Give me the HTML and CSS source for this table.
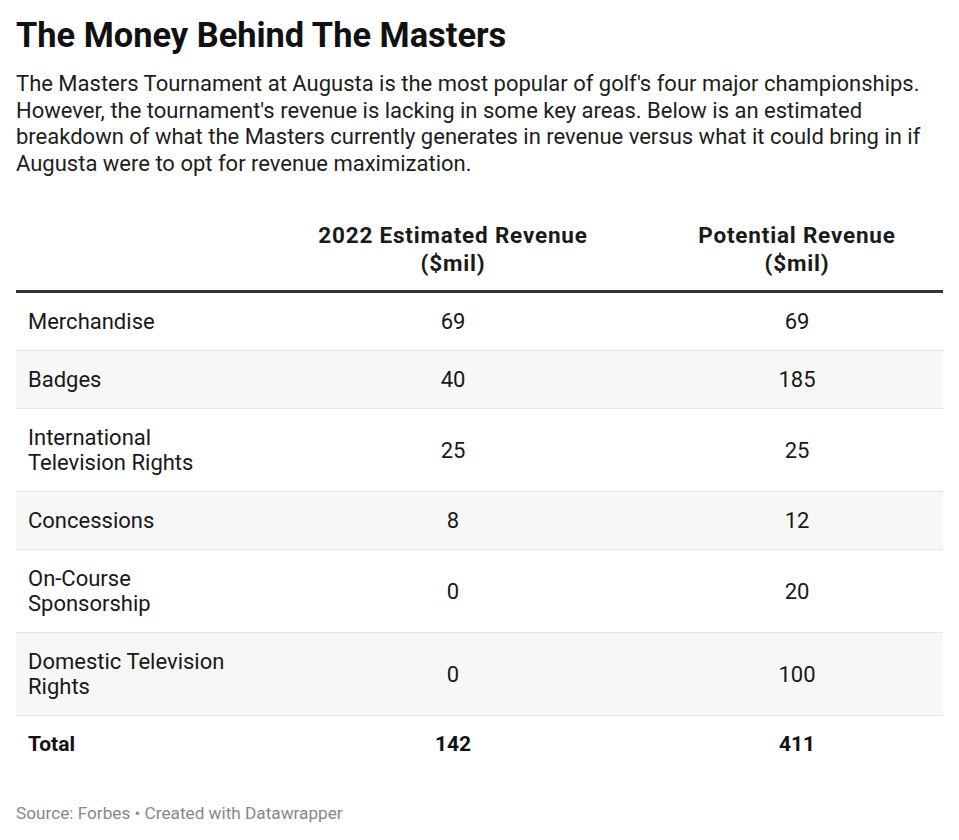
FILE: index.html
```html
<!DOCTYPE html>
<html lang="en">
<head>
<meta charset="utf-8">
<title>The Money Behind The Masters</title>
<link rel="stylesheet" href="styles.css">
</head>
<body>
<div class="chart">
  <h1 class="title">The Money Behind The Masters</h1>
  <p class="desc">The Masters Tournament at Augusta is the most popular of golf's four major championships. However, the tournament's revenue is lacking in some key areas. Below is an estimated breakdown of what the Masters currently generates in revenue versus what it could bring in if Augusta were to opt for revenue maximization.</p>
  <table class="tbl">
    <colgroup>
      <col class="c1"><col class="c2"><col class="c3">
    </colgroup>
    <thead>
      <tr>
        <th></th>
        <th class="num">2022 Estimated Revenue<br>($mil)</th>
        <th class="num">Potential Revenue<br>($mil)</th>
      </tr>
    </thead>
    <tbody>
      <tr><td>Merchandise</td><td class="num">69</td><td class="num">69</td></tr>
      <tr class="alt"><td>Badges</td><td class="num">40</td><td class="num">185</td></tr>
      <tr><td>International<br>Television Rights</td><td class="num">25</td><td class="num">25</td></tr>
      <tr class="alt"><td>Concessions</td><td class="num">8</td><td class="num">12</td></tr>
      <tr><td>On-Course<br>Sponsorship</td><td class="num">0</td><td class="num">20</td></tr>
      <tr class="alt"><td>Domestic Television<br>Rights</td><td class="num">0</td><td class="num">100</td></tr>
      <tr class="total"><td>Total</td><td class="num">142</td><td class="num">411</td></tr>
    </tbody>
  </table>
  <div class="foot">Source: Forbes • Created with Datawrapper</div>
</div>
</body>
</html>
```
FILE: styles.css
```css
html, body {
  margin: 0;
  padding: 0;
  background: #ffffff;
}
body {
  font-family: Roboto, "Liberation Sans", Arial, sans-serif;
  color: #181818;
}
.chart {
  width: 927px;
  padding: 12px 16px 0 16px;
}
.title {
  margin: 0;
  font-size: 34.4px;
  line-height: 46px;
  font-weight: 700;
  color: #111;
}
.desc {
  margin: 13px 0 0 0;
  font-size: 22px;
  line-height: 26.5px;
  color: #1d1d1d;
}
.tbl {
  margin-top: 36px;
  width: 927px;
  border-collapse: collapse;
  table-layout: fixed;
  font-size: 22px;
}
.c1 { width: 239px; }
.c2 { width: 396px; }
.c3 { width: 292px; }
.tbl th {
  font-weight: 700;
  font-size: 22.5px;
  letter-spacing: 0.8px;
  line-height: 28px;
  padding: 8px 12px 13px 12px;
  border-bottom: 3px solid #333;
  color: #1a1a1a;
  vertical-align: bottom;
}
.tbl td {
  line-height: 25px;
  padding: 16px 12px;
  border-bottom: 1px solid #e6e6e6;
  text-align: left;
}
.tbl .num {
  text-align: center;
}
.tbl tr.alt td {
  background: #f7f7f7;
}
.tbl tr.total td {
  font-size: 21px;
  font-weight: 700;
  border-bottom: none;
  color: #111;
}
.foot {
  margin-top: 30px;
  font-size: 17.2px;
  line-height: 20px;
  color: #888;
}
```
